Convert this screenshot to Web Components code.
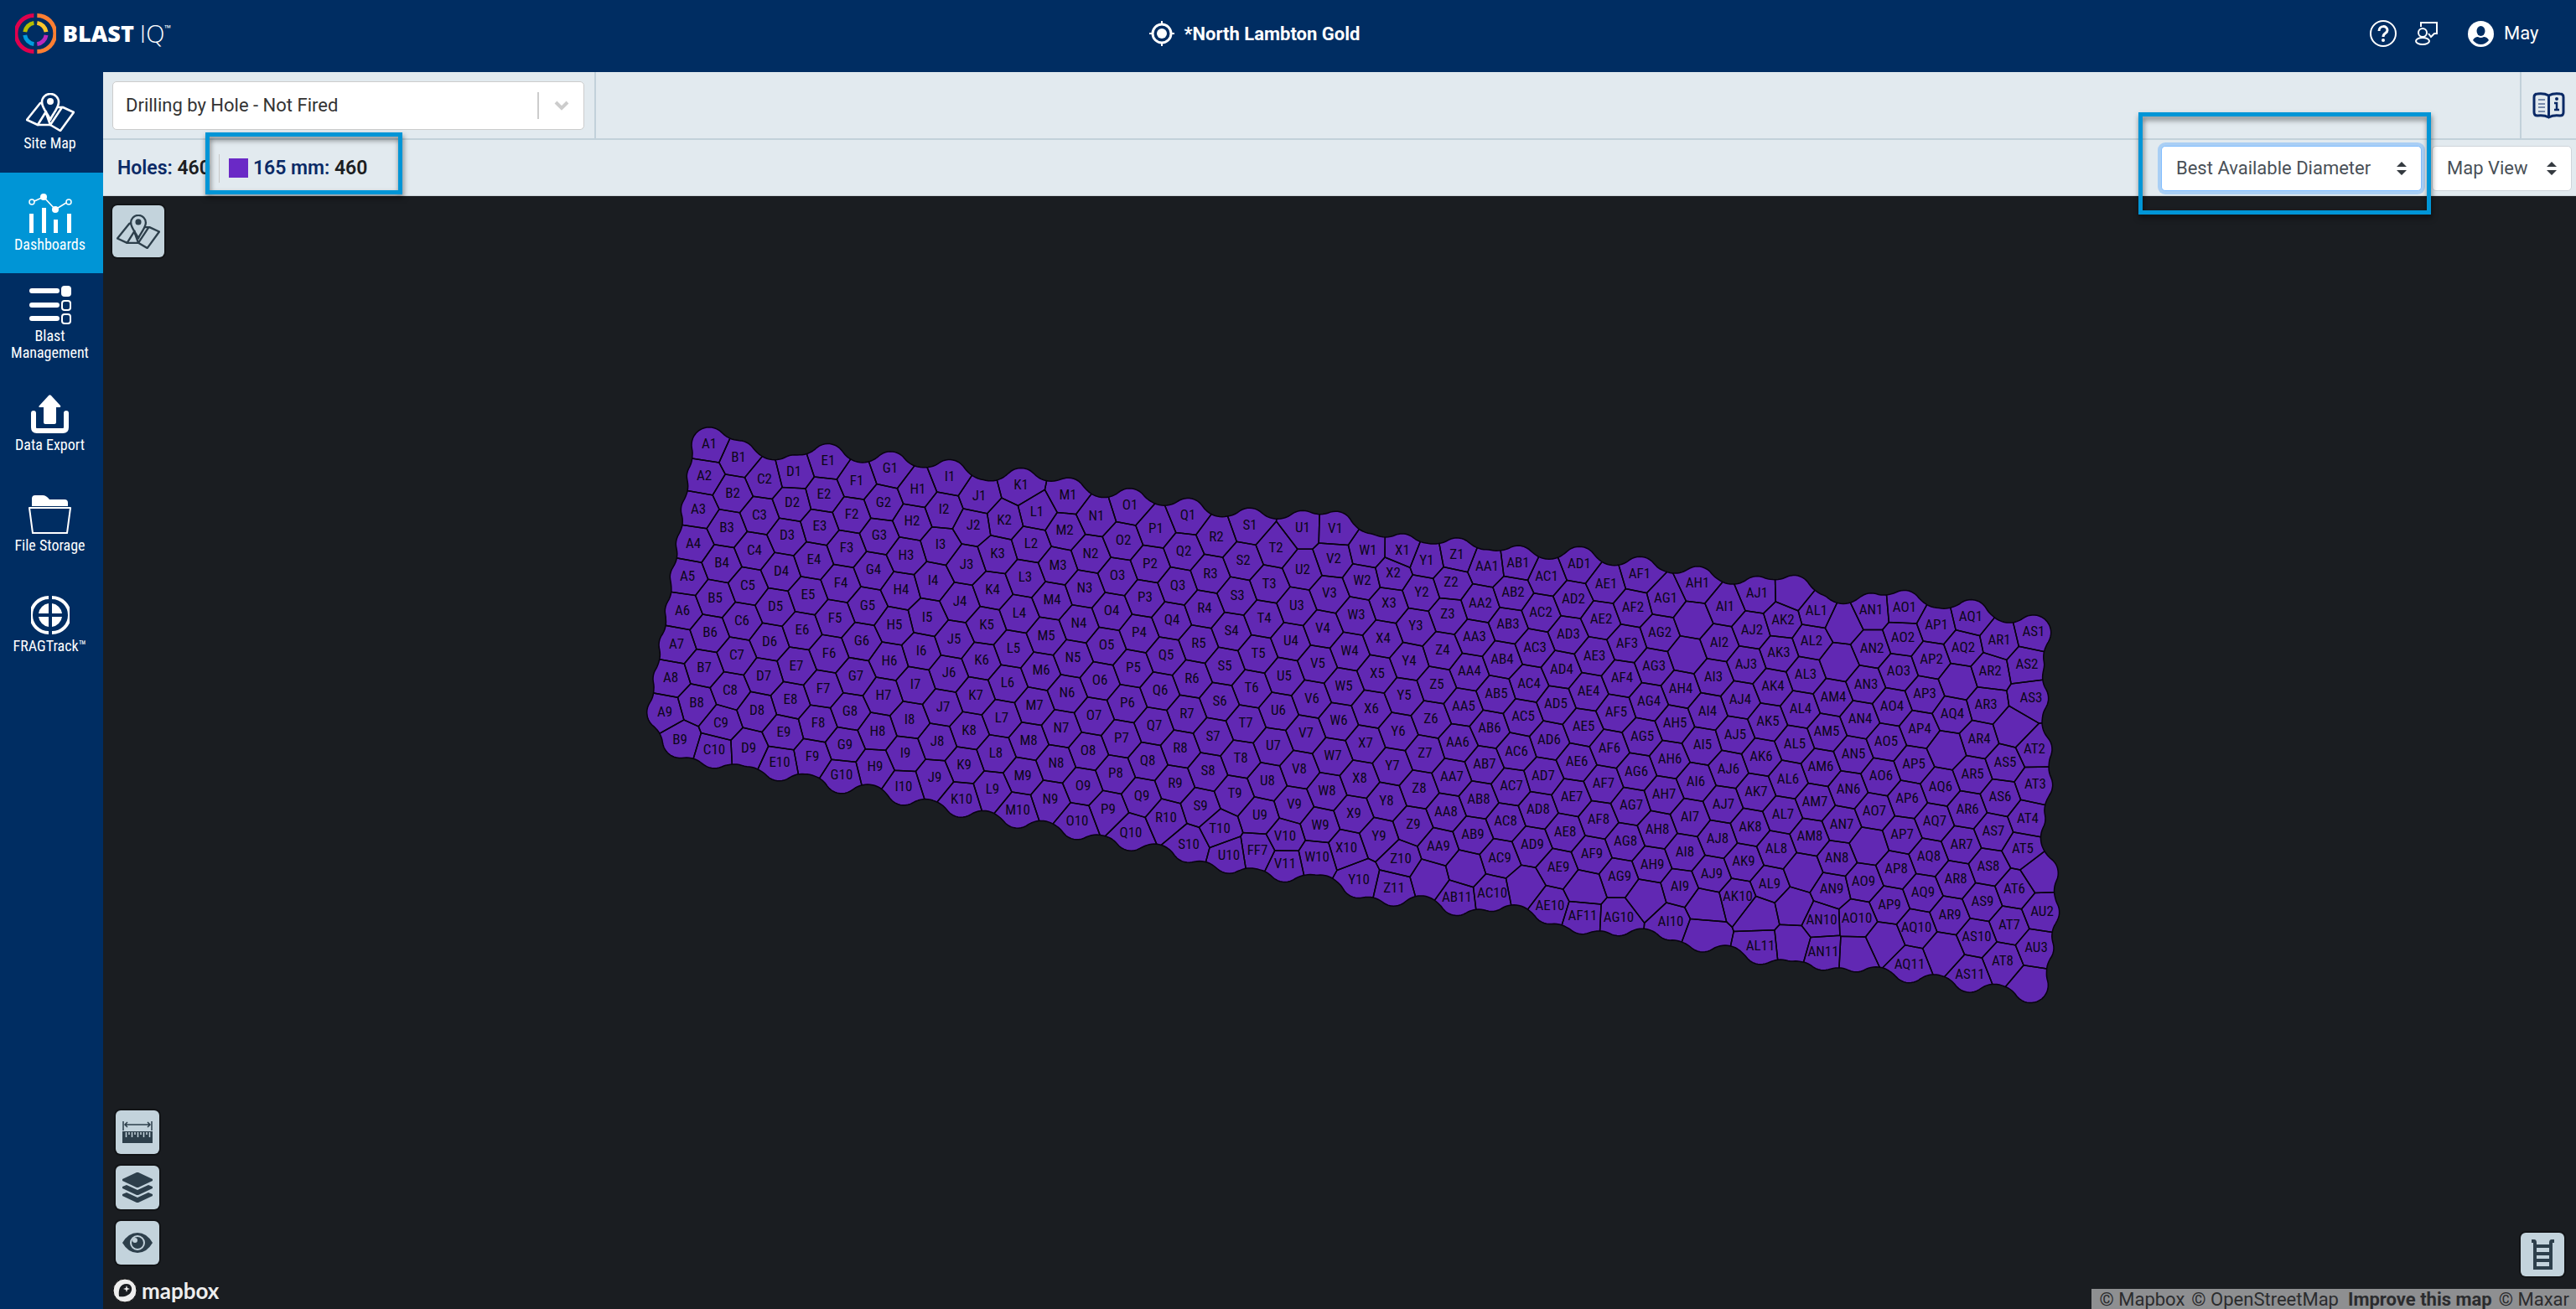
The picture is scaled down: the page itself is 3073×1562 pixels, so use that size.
<!DOCTYPE html>
<html lang="en">
<head>
<meta charset="utf-8">
<title>BlastIQ - Dashboards</title>
<style>
    html, body{
        height: 100%;
        margin: 0;
    }
    body{
        font-family: Roboto, "Liberation Sans", sans-serif;
        font-size: 22px;
        --navy: #002d62;
        --blue: #0095d6;
        --panel: #e2eaef;
        --line: #c2d1da;
        --ink: #2d3f4b;
        --narrow: "Roboto Condensed", "Liberation Sans Narrow", Roboto, sans-serif;
    }
</style>
</head>
<body>
<blast-app></blast-app>

<script>
const icons = {
    siteMap: `<svg viewBox="0 0 58 46" width="58" height="46" fill="none" stroke="currentColor" stroke-width="2.6" stroke-linejoin="round" stroke-linecap="round">
        <path d="M19 12 L17 12 L1 32 L14 38 L29 38 L41 45 L57 23 L44 17 L38 17"/>
        <path d="M14 38 L24 22 M24 24 L29 38 M29 38 L43 17"/>
        <path d="M29 32 C27 26 19 18 19 11 A10 10 0 0 1 39 11 C39 18 31 26 29 32 Z"/>
        <circle cx="29" cy="10" r="4" fill="currentColor" stroke="none"/></svg>`,
    dashboards: `<svg viewBox="0 0 52 47" width="52" height="47" fill="currentColor">
        <path d="M1 24 h5 v23 h-5z M16 17 h5 v30 h-5z M30 31 h5 v16 h-5z M46 24 h5 v23 h-5z"/>
        <path d="M7 9 L18 4 L32 19 L45 11" fill="none" stroke="currentColor" stroke-width="1.5"/>
        <circle cx="18" cy="4" r="4"/><circle cx="32" cy="19" r="4"/>
        <g fill="none" stroke="currentColor" stroke-width="1.5"><circle cx="4" cy="10" r="3"/><circle cx="48" cy="10" r="3"/></g></svg>`,
    management: `<svg viewBox="0 0 50 46" width="50" height="46" fill="currentColor">
        <rect y="3" width="36" height="6" rx="3"/><rect y="20" width="36" height="6" rx="3"/><rect y="36" width="36" height="6" rx="3"/>
        <rect x="38" width="12" height="13" rx="4"/>
        <g fill="none" stroke="currentColor" stroke-width="2"><rect x="39" y="18" width="10" height="11" rx="3"/><rect x="39" y="34" width="10" height="11" rx="3"/></g></svg>`,
    dataExport: `<svg viewBox="0 0 45 46" width="45" height="46" fill="currentColor">
        <path d="M21 1 q1.500 -1.500 3 0 L35 13 q1 2 -1 2 H30 V33 q0 2 -2 2 H17 q-2 0 -2 -2 V15 H11 q-3 0 -1 -2 Z"/>
        <path d="M3 22 V39 q0 4 4 4 H38 q4 0 4 -4 V22" fill="none" stroke="currentColor" stroke-width="6" stroke-linecap="round"/></svg>`,
    storage: `<svg viewBox="0 0 51 46" width="51" height="46" fill="currentColor">
        <path d="M4 13 V4 q0 -4 4 -4 H17 q4 0 8 5 H43 q4 0 4 4 V13 Z"/>
        <path d="M1 15 H50 L46 45 H5 Z" fill="none" stroke="currentColor" stroke-width="2" stroke-linejoin="round"/></svg>`,
    frag: `<svg viewBox="0 0 46 46" width="46" height="46" fill="currentColor">
        <path d="M21 2 A21 21 0 0 0 21 44 M25 2 A21 21 0 0 1 25 44" fill="none" stroke="currentColor" stroke-width="4"/>
        <path d="M21 9 V21 H9 A14 14 0 0 1 21 9 Z M25 9 V21 H37 A14 14 0 0 0 25 9 Z M21 37 V25 H9 A14 14 0 0 0 21 37 Z M25 37 V25 H37 A14 14 0 0 1 25 37 Z"/></svg>`,
    target: `<svg viewBox="0 0 30 30" width="30" height="30" fill="none" stroke="currentColor" stroke-width="2">
        <circle cx="15" cy="15" r="11" stroke-width="3"/><circle cx="15" cy="15" r="6" fill="currentColor" stroke="none"/>
        <path d="M15 0 V5 M15 25 V30 M0 15 H5 M25 15 H30"/></svg>`,
    help: `<svg viewBox="0 0 32 32" width="32" height="32" fill="none" stroke="currentColor" stroke-width="2">
        <circle cx="16" cy="16" r="15"/>
        <path d="M11 13 C11 6 21 6 21 12 C21 16 16 15 16 20" stroke-width="3"/><circle cx="16" cy="24" r="2" fill="currentColor" stroke="none"/></svg>`,
    feedback: `<svg viewBox="0 0 28 28" width="28" height="28" fill="none" stroke="currentColor" stroke-width="2">
        <circle cx="9" cy="13" r="5"/><ellipse cx="9" cy="23" rx="8" ry="4"/>
        <path d="M7 6 V1 H26 V14 H23 L19 18 L16 14"/></svg>`,
    user: `<svg viewBox="0 0 31 31" width="31" height="31"><circle cx="15.500" cy="15.500" r="15.500" fill="currentColor"/>
        <ellipse cx="15.500" cy="12" rx="5" ry="6" fill="var(--navy)"/><path d="M6 23 Q8 19 12 19 Q15.500 21 19 19 Q23 19 25 23 Q21 28 15.500 28 Q10 28 6 23 Z" fill="var(--navy)"/></svg>`,
    book: `<svg viewBox="0 0 39 32" width="39" height="32" fill="none" stroke="#0b2a66" stroke-width="3">
        <path d="M19.500 4 Q14 1 6 2 Q2 2 2 6 V24 Q2 28 6 28 Q14 27 19.500 30 Q25 27 33 28 Q37 28 37 24 V6 Q37 2 33 2 Q25 1 19.500 4 V29"/>
        <path d="M7 9 H15 M7 14 H15 M7 18 H15 M7 23 H15" stroke-width="1"/>
        <path d="M26 13 H29 V21 M26 21 H32" stroke-width="2.500"/><circle cx="29" cy="8" r="2" fill="#0b2a66" stroke="none"/></svg>`,
    ruler: `<svg viewBox="0 0 36 26" width="36" height="26" fill="currentColor">
        <path d="M0 12 H36 V26 H0 Z"/><path d="M1 0 V11 M35 0 V11 M4 4 H32 M6 1 L3 4 L6 7 M30 1 L33 4 L30 7" fill="none" stroke="currentColor" stroke-width="1.500"/>
        <path d="M4.500 13 V19 M8 13 V16 M11.500 13 V19 M15 13 V16 M18.500 13 V19 M22 13 V16 M25.500 13 V19 M29 13 V16 M32.500 13 V19" stroke="var(--line)" stroke-width="1.500"/></svg>`,
    layers: `<svg viewBox="0 0 36 36" width="36" height="36" fill="currentColor">
        <path d="M17 0 H19 L36 8 V10 L19 18 H17 L0 10 V8 Z"/>
        <path d="M0 17 L5 15 L18 21 L31 15 L36 17 V19 L19 27 H17 L0 19 Z"/><path d="M0 26 L5 24 L18 30 L31 24 L36 26 V28 L19 36 H17 L0 28 Z"/></svg>`,
    eye: `<svg viewBox="0 0 36 24" width="36" height="24"><path d="M0 12 Q7 0 18 0 Q29 0 36 12 Q29 24 18 24 Q7 24 0 12 Z" fill="currentColor"/>
        <circle cx="18" cy="12" r="8" fill="none" stroke="var(--line)" stroke-width="2"/><circle cx="15" cy="9" r="3" fill="var(--line)"/></svg>`,
    ladder: `<svg viewBox="0 0 29 36" width="29" height="36" fill="none" stroke="currentColor" stroke-width="4">
        <path d="M1 2 H4 Q5 2 5 4 V36 M28 2 H25 Q24 2 24 4 V36 M5 8 H24 M5 17 H24 M5 25 H24 M5 34 H24"/></svg>`,
    logo: `<svg viewBox="0 0 50 50" width="50" height="50" fill="none" stroke-width="5">
        <path d="M23 3 A22 22 0 0 0 23 47" stroke="#e0004d"/><path d="M27 3 A22 22 0 0 1 27 47" stroke="#ff7f32"/>
        <path d="M23 12 A13 13 0 0 0 12 23" stroke="#b5bd00"/><path d="M27 12 A13 13 0 0 1 38 23" stroke="#ffc72c"/>
        <path d="M23 38 A13 13 0 0 1 12 27" stroke="#009cde"/><path d="M27 38 A13 13 0 0 0 38 27" stroke="#bb29bb"/></svg>`,
    mapbox: `<svg viewBox="0 0 30 30" width="30" height="30"><circle cx="15" cy="15" r="14" fill="#eee" stroke="#111" stroke-width="1"/>
        <path d="M8 22 C7 14 9 7 17 7 C22 7 25 12 22 17 C20 21 14 23 8 22 Z" fill="#1a1d21"/><path d="M17 9 L18 12 L21 13 L18 14 L17 17 L16 14 L13 13 L16 12 Z" fill="#eee"/></svg>`
};

// Hole labels as they were digitised: x, y inside a sheet, kx and ky units per map pixel.
// A "-" is a hole with no name.
const sheets = [
    { x: 760, y: 500, kx: 3, ky: 3, holes: `
A1 258 88,A2 241 201,A3 220 321,A4 202 443,A5 181 561,A6 163 683,A7 141 804,A8 120 925,A9 98 1046,
B1 364 136,B2 343 263,B3 322 387,B4 303 514,B5 280 638,B6 260 763,B7 240 887,B8 214 1014,B9 154 1146,
C2 457 213,C3 439 341,C4 419 467,C5 397 594,C6 376 719,C7 356 844,C8 334 968,C9 301 1085,C10 277 1183,
D1 562 187,D2 556 297,D3 537 415,D4 515 543,D5 495 669,D6 474 794,D7 454 917,D8 430 1040,D9 398 1177,
E1 683 147,E2 670 267,E3 653 381,E4 632 502,E5 611 628,E6 590 753,E7 571 881,E8 549 1003,E9 525 1119,E10 509 1228,
F1 786 218,F2 768 339,F3 749 459,F4 729 584,F5 708 710,F6 687 836,F7 666 962,F8 647 1087,F9 627 1206,
G1 907 175,G2 881 297,G3 867 413,G4 846 538,G5 824 665,G6 803 792,G7 782 918,G8 763 1044,G9 743 1164,G10 732 1273,
H1 1004 249,H2 985 363,H3 964 485,H4 945 609,H5 922 736,H6 902 863,H7 881 988,H8 860 1115,H9 852 1243,
I5 1039 707,I6 1017 827,I7 997 948,I8 976 1075,I9 961 1195,I10 955 1315` },
    { x: 1100, y: 540, kx: 3, ky: 3, holes: `
I1 98 84,I2 77 202,I3 65 328,I4 40 457,
J1 203 154,J2 182 257,J3 159 398,J4 136 532,J5 115 667,J6 95 787,J7 74 908,J8 54 1033,J9 45 1160,
K1 354 114,K2 295 239,K3 270 360,K4 253 489,K5 230 616,K6 212 742,K7 191 866,K8 169 992,K9 151 1116,K10 140 1238,
L1 411 210,L2 390 323,L3 370 445,L4 348 573,L5 327 699,L6 307 823,L7 285 947,L8 265 1075,L9 252 1203,
M1 523 149,M2 511 277,M3 486 401,M4 465 526,M5 445 653,M6 425 778,M7 402 904,M8 382 1029,M9 361 1154,M10 342 1277,
N1 623 225,N2 604 360,N3 583 484,N4 562 609,N5 541 733,N6 520 859,N7 499 984,N8 479 1109,N9 459 1238,
O1 743 187,O2 719 313,O3 700 439,O4 679 565,O5 659 688,O6 637 813,O7 616 940,O8 595 1065,O9 575 1190,O10 555 1318,
P1 836 269,P2 817 395,P3 797 517,P4 777 643,P5 755 769,P6 734 894,P7 713 1020,P8 692 1147,P9 667 1276,
Q1 951 222,Q2 936 350,Q3 914 473,Q4 893 598,Q5 873 724,Q6 851 850,Q7 830 975,Q8 808 1101,Q9 786 1227,Q10 748 1358,
R3 1031 431,R4 1010 556,R5 989 681,R6 967 806,R7 947 932,R8 925 1057,R9 905 1182,R10 874 1304,
S8 1022 1138,S9 996 1264,S10 954 1400` },
    { x: 1440, y: 580, kx: 3, ky: 3, holes: `
R2 34 179,S1 152 137,S2 130 264,S3 107 389,S4 87 516,S5 64 641,S6 44 767,S7 22 893,
T2 246 219,T3 223 347,T4 203 471,T5 182 597,T6 160 721,T7 139 847,T8 120 973,T9 99 1099,T10 44 1223,
U1 342 146,U2 342 297,U3 320 427,U4 299 552,U5 277 677,U6 256 802,U7 237 928,U8 215 1054,U9 189 1176,U10 79 1319,
FF7 181 1303,
V1 460 149,V2 453 258,V3 439 381,V4 415 508,V5 395 633,V6 374 758,V7 353 883,V8 331 1011,V9 311 1137,V10 279 1251,V11 278 1350,
W1 575 228,W2 556 335,W3 533 460,W4 511 588,W5 490 714,W6 470 838,W7 450 964,W8 429 1089,W9 404 1212,W10 393 1325,
X1 698 229,X2 665 309,X3 650 418,X4 629 543,X5 608 668,X6 588 794,X7 567 919,X8 546 1045,X9 525 1170,X10 499 1293,
Y1 787 264,Y2 767 377,Y3 748 499,Y4 724 624,Y5 706 748,Y6 684 875,Y7 664 999,Y8 642 1124,Y9 615 1252,Y10 542 1407,
Z1 894 244,Z2 873 342,Z3 862 457,Z4 842 586,Z5 821 708,Z6 802 830,Z7 780 954,Z8 759 1081,Z9 738 1210,Z10 692 1332,Z11 668 1436,
AA1 1001 286,AA2 978 418,AA3 958 538,AA4 938 661,AA5 917 786,AA6 898 916,AA7 876 1037,AA8 856 1163,AA9 829 1287,
AB5 1034 742,AB6 1012 865,AB7 992 994,AB8 972 1119,AB9 952 1245,AB11 894 1470,AC9 1047 1328,AC10 1019 1455,
- 797 1400,- 925 1367` },
    { x: 1780, y: 620, kx: 3, ky: 2.9037, holes: `
AB1 93 147,AB2 75 250,AB3 58 361,AB4 37 481,
AC1 196 194,AC2 175 318,AC3 152 440,AC4 131 565,AC5 111 680,AC6 86 800,AC7 68 921,AC8 49 1043,
AD1 312 150,AD2 290 273,AD3 272 394,AD4 248 516,AD5 229 637,AD6 205 761,AD7 184 886,AD8 165 1002,AD9 144 1124,
AE1 407 220,AE2 389 343,AE3 367 470,AE4 345 593,AE5 326 715,AE6 302 837,AE7 284 959,AE8 261 1079,AE9 236 1203,AE10 206 1336,
AF1 529 185,AF2 505 301,AF3 483 426,AF4 464 547,AF5 444 665,AF6 421 790,AF7 399 913,AF8 380 1036,AF9 357 1157,AF11 323 1371,
AG1 621 271,AG2 601 388,AG3 580 505,AG4 560 627,AG5 537 748,AG6 517 870,AG7 497 988,AG8 476 1113,AG9 455 1234,AG10 453 1377,
AH1 735 219,AH4 676 583,AH5 654 704,AH6 635 827,AH7 615 950,AH8 591 1071,AH9 572 1192,
AI1 834 299,AI2 813 423,AI3 793 542,AI4 772 661,AI5 752 778,AI6 730 905,AI7 709 1028,AI8 689 1149,AI9 672 1270,AI10 639 1392,
AJ1 948 253,AJ2 929 379,AJ3 910 498,AJ4 889 621,AJ5 869 742,AJ6 846 861,AJ7 827 983,AJ8 807 1102,AJ9 785 1226,
AK2 1040 346,AK3 1027 458,AK4 1005 576,AK5 986 697,AK6 964 819,AK7 944 940,AK8 923 1062,AK9 901 1183,AK10 879 1305,
AL8 1018 1139,AL9 994 1260,AL11 961 1476,
- 720 345,- 699 464,- 117 1270,- 332 1275,- 553 1303,- 763 1333,- 754 1433,- 957 1363` },
    { x: 2120, y: 680, kx: 3, ky: 2.9585, holes: `
AL1 141 142,AL2 124 248,AL3 103 367,AL4 83 488,AL5 63 611,AL6 40 736,AL7 20 861,
AM4 200 446,AM5 178 569,AM6 157 693,AM7 136 816,AM8 117 939,
AN1 337 140,AN2 338 274,AN3 317 401,AN4 296 524,AN5 273 649,AN6 254 771,AN7 231 895,AN8 214 1016,AN9 195 1125,AN10 159 1233,AN11 166 1347,
AO1 455 130,AO2 450 236,AO3 434 355,AO4 412 479,AO5 391 604,AO6 371 726,AO7 349 849,AO9 310 1098,AO10 286 1228,
AP1 570 192,AP2 551 314,AP3 529 436,AP4 509 558,AP5 489 683,AP6 466 806,AP7 448 932,AP8 425 1054,AP9 403 1179,
AQ1 694 163,AQ2 667 272,AQ4 627 505,AQ6 584 762,AQ7 563 886,AQ8 542 1010,AQ9 522 1136,AQ10 499 1260,AQ11 473 1391,
AR1 796 245,AR2 761 355,AR3 747 472,AR4 722 595,AR5 700 719,AR6 680 843,AR7 659 966,AR8 638 1089,AR9 618 1215,
AS1 917 217,AS2 893 331,AS3 908 449,AS5 815 678,AS6 799 799,AS7 775 920,AS8 757 1045,AS9 735 1168,AS10 714 1294,AS11 689 1425,
AT2 921 629,AT3 923 755,AT4 897 875,AT5 878 982,AT6 850 1125,AT7 830 1250,AT8 807 1379,AU2 947 1204,AU3 927 1331,
- 60 77,- 238 187,- 222 323,- 649 390,- 608 631,- 845 556,- 329 970,- 95 1061,- 58 1185,- 52 1315,
- 283 1353,- 386 1306,- 597 1343,- 943 1066,- 907 1462` }
];

function readHoles(){
    const holes = [];
    sheets.forEach(s => {
        s.holes.split(',').forEach(row => {
            const [name, x, y] = row.trim().split(' ');
            // the hole itself sits a little under the middle of its label
            const hx = s.x + x / s.kx, hy = s.y + y / s.ky;
            holes.push({ name: name === '-' ? '' : name, x: hx, y: hy + 1.5, ly: hy });
        });
    });
    return holes;
}

// Voronoi cell of one hole: a box cut by the bisector with every near hole
function cellOf(hole, holes){
    let poly = [[-60, -60], [60, -60], [60, 60], [-60, 60]].map(p => [hole.x + p[0], hole.y + p[1]]);
    holes.forEach(o => {
        const dx = o.x - hole.x, dy = o.y - hole.y;
        if (o === hole || dx * dx + dy * dy > 32400) return;
        const mx = (o.x + hole.x) / 2, my = (o.y + hole.y) / 2;
        const side = p => (p[0] - mx) * dx + (p[1] - my) * dy;
        const out = [];
        poly.forEach((a, i) => {
            const b = poly[(i + 1) % poly.length];
            const sa = side(a), sb = side(b);
            if (sa <= 0) out.push(a);
            if ((sa <= 0) !== (sb <= 0)) {
                const t = sa / (sa - sb);
                out.push([a[0] + (b[0] - a[0]) * t, a[1] + (b[1] - a[1]) * t]);
            }
        });
        poly = out;
    });
    return poly;
}

// Grid for the outer edge of the pattern
const grid = { x: 690, y: 430, step: 3, cols: 630, rows: 300 };

// Distance from every grid point to the nearest of the points, far ones stay at 1000
function distances(points, reach){
    const field = new Float64Array(grid.cols * grid.rows).fill(1000);
    const n = Math.ceil(reach / grid.step) + 2;
    points.forEach(([px, py]) => {
        const ci = Math.round((px - grid.x) / grid.step), cj = Math.round((py - grid.y) / grid.step);
        for (let j = Math.max(cj - n, 0); j <= Math.min(cj + n, grid.rows - 1); j++) {
            for (let i = Math.max(ci - n, 0); i <= Math.min(ci + n, grid.cols - 1); i++) {
                const d = Math.hypot(grid.x + i * grid.step - px, grid.y + j * grid.step - py);
                const at = j * grid.cols + i;
                if (d < field[at]) field[at] = d;
            }
        }
    });
    return field;
}

// Marching squares, gives the closed lines where the field crosses zero
function contours(field){
    const points = {}, next = {};
    const val = (i, j) => field[j * grid.cols + i];
    const cross = (i, j, k, l) => {
        const key = (i + k) + '_' + (j + l);
        const a = val(i, j), b = val(k, l), t = a / (a - b);
        points[key] = [grid.x + (i + (k - i) * t) * grid.step, grid.y + (j + (l - j) * t) * grid.step];
        return key;
    };
    for (let j = 0; j < grid.rows - 1; j++) {
        for (let i = 0; i < grid.cols - 1; i++) {
            const c = [[i, j], [i + 1, j], [i + 1, j + 1], [i, j + 1]];
            let from, to;
            c.forEach((p, n) => {
                const q = c[(n + 1) % 4];
                const a = val(...p) > 0, b = val(...q) > 0;
                if (a && !b) from = cross(...p, ...q);
                if (!a && b) to = cross(...p, ...q);
            });
            if (from) next[from] = to;
        }
    }
    const lines = [], seen = {};
    Object.keys(next).forEach(start => {
        if (seen[start]) return;
        const line = [];
        for (let k = start; k && !seen[k]; k = next[k]) {
            seen[k] = true;
            line.push(points[k]);
        }
        lines.push(line);
    });
    return lines.filter(l => l.length > 200);
}

// Discs round the holes, grown by `close` and shrunk back, so the gaps between them fill up
function outlineOf(holes){
    const radius = 21, close = 28;
    const grown = distances(holes.map(h => [h.x, h.y]), radius + close).map(d => radius + close - d);
    const rim = contours(grown).flat();
    const inner = distances(rim, close).map((d, i) => grown[i] > 0 ? d - close : -close);
    return contours(inner).map(l => 'M' + l.map(p => p[0].toFixed(1) + ' ' + p[1].toFixed(1)).join('L') + 'Z').join('');
}

class BlastApp extends HTMLElement{
    constructor(){
        super()
        this._shadowRoot = this.attachShadow({mode : 'open'});
        this._shadowRoot.innerHTML = `
    <style>
        :host{
            display: flex;
            flex-direction: column;
            height: 100vh;
            overflow: hidden;
        }
        .body{
            display: flex;
            flex: 1;
            min-height: 0;
        }
        main{
            display: flex;
            flex-direction: column;
            flex: 1;
            min-width: 0;
        }
    </style>
    <app-header></app-header>
    <div class="body">
        <side-nav>
            <nav-item icon="siteMap">Site Map</nav-item>
            <nav-item icon="dashboards" active>Dashboards</nav-item>
            <nav-item icon="management">Blast Management</nav-item>
            <nav-item icon="dataExport">Data Export</nav-item>
            <nav-item icon="storage">File Storage</nav-item>
            <nav-item icon="frag">FRAGTrack™</nav-item>
        </side-nav>
        <main>
            <tool-bar></tool-bar>
            <blast-map></blast-map>
        </main>
    </div>`
    }
}

class AppHeader extends HTMLElement{
    constructor(){
        super()
        this._shadowRoot = this.attachShadow({mode : 'open'});
        this._shadowRoot.innerHTML = `
    <style>
        :host{
            display: block;
            background-color: var(--navy);
            color: white;
        }
        header{
            display: flex;
            align-items: center;
            height: 86px;
            padding-bottom: 6px;
            box-sizing: border-box;
        }
        svg{ display: block; }
        .logo{
            display: flex;
            align-items: center;
            gap: 8px;
            width: 186px;
            padding-left: 18px;
            color: white;
            text-decoration: none;
            white-space: nowrap;
        }
        .word{
            display: flex;
            align-items: center;
            font: 800 27px/30px "Open Sans", sans-serif;
        }
        .iq{ font-weight: 300; font-size: 29px; margin-left: 7px; }
        .tm{ font-size: 10px; font-weight: 600; align-self: flex-start; line-height: 16px; }
        .site{
            display: flex;
            flex: 1;
            justify-content: center;
            align-items: center;
            gap: 12px;
            margin: 0;
            font-size: 22px;
            font-weight: 700;
        }
        .tools{
            display: flex;
            align-items: center;
            width: 246px;
            padding-left: 38px;
        }
        button{
            display: flex;
            align-items: center;
            gap: 12px;
            padding: 0;
            border: 0;
            background: none;
            color: inherit;
            font: 22px/28px Roboto, sans-serif;
        }
        .help{ margin-right: 22px; }
        .user{ margin-left: 35px; }
    </style>
    <header>
        <a class="logo" href="#">${icons.logo}<span class="word">BLAST<span class="iq">IQ</span><span class="tm">™</span></span></a>
        <h1 class="site">${icons.target}<span>*North Lambton Gold</span></h1>
        <div class="tools">
            <button class="help" aria-label="Help">${icons.help}</button>
            <button aria-label="Feedback">${icons.feedback}</button>
            <button class="user">${icons.user}<span>May</span></button>
        </div>
    </header>`
    }
}

class SideNav extends HTMLElement{
    constructor(){
        super()
        this._shadowRoot = this.attachShadow({mode : 'open'});
        this._shadowRoot.innerHTML = `
    <style>
        :host{
            display: block;
            flex: none;
            width: 123px;
            background-color: var(--navy);
        }
        nav{
            display: flex;
            flex-direction: column;
        }
    </style>
    <nav><slot></slot></nav>`
    }
}

class NavItem extends HTMLElement{
    constructor(){
        super()
        this._shadowRoot = this.attachShadow({mode : 'open'});
    }
    connectedCallback(){
        this._shadowRoot.innerHTML = `
    <style>
        :host{ display: block; }
        :host([active]){ background-color: var(--blue); }
        a{
            display: flex;
            flex-direction: column;
            align-items: center;
            justify-content: center;
            gap: 4px;
            height: 120px;
            padding: 0 12px 0 8px;
            box-sizing: border-box;
            color: white;
            text-align: center;
            text-decoration: none;
            font: 18px/20px var(--narrow);
        }
        svg{ display: block; }
    </style>
    <a href="#">${icons[this.getAttribute('icon')]}<span><slot></slot></span></a>`
    }
}

// A select with its own arrow laid over the right end
class DropDown extends HTMLElement{
    constructor(){
        super()
        this._shadowRoot = this.attachShadow({mode : 'open'});
    }
    connectedCallback(){
        const big = this.hasAttribute('big');
        const arrow = big
            ? `<svg viewBox="0 0 44 32" width="44" height="32" fill="none" stroke="#ccc"><path d="M1 0 V32" stroke-width="2"/><path d="M22 12 L29 19 L36 12" stroke-width="4"/></svg>`
            : `<svg viewBox="0 0 12 16" width="12" height="16" fill="#343a40"><path d="M6 0 L12 6 H0 Z M0 10 H12 L6 16 Z"/></svg>`;
        this._shadowRoot.innerHTML = `
    <style>
        :host{ display: grid; align-items: center; }
        select, svg{ grid-area: 1 / 1; }
        select{
            appearance: none;
            width: 100%;
            height: 54px;
            padding: 0 17px;
            border: 1px solid #ced4da;
            border-radius: 5px;
            background-color: white;
            color: #495057;
            font: 22px/30px Roboto, sans-serif;
        }
        :host([big]) select{ height: 58px; color: #333; border-color: #ccc; padding: 0 15px; }
        :host([focused]) select{ border-color: #80bdff; box-shadow: 0 0 0 4px #a9cff5; }
        svg{
            justify-self: end;
            margin-right: 18px;
            pointer-events: none;
        }
        :host([big]) svg{ margin-right: 12px; }
    </style>
    <select aria-label="${this.getAttribute('label')}"><option>${this.getAttribute('value')}</option></select>${arrow}`
    }
}

class CallOut extends HTMLElement{
    constructor(){
        super()
        this._shadowRoot = this.attachShadow({mode : 'open'});
        this._shadowRoot.innerHTML = `
    <style>
        :host{
            display: block;
            position: absolute;
            border: 5px solid var(--blue);
            filter: drop-shadow(1px 4px 3px rgba(0, 0, 0, .5));
            pointer-events: none;
        }
    </style>`
    }
}

class ToolBar extends HTMLElement{
    constructor(){
        super()
        this._shadowRoot = this.attachShadow({mode : 'open'});
        this._shadowRoot.innerHTML = `
    <style>
        :host{
            display: block;
            position: relative;
            z-index: 1;
            background-color: var(--panel);
        }
        .row{
            display: flex;
            justify-content: space-between;
            align-items: stretch;
        }
        .top{ height: 79px; border-bottom: 2px solid var(--line); }
        .bottom{ height: 65px; align-items: center; padding: 1px 5px 0 17px; border-bottom: 1px solid #cdd6db; }
        .pick{
            width: 563px;
            padding: 11px 12px 0 11px;
            border-right: 2px solid var(--line);
        }
        .guide{
            display: flex;
            align-items: center;
            width: 67px;
            padding: 0 0 0 13px;
            box-sizing: border-box;
            border: 0;
            border-left: 2px solid var(--line);
            background: none;
        }
        .legend, .entry, .views{ display: flex; align-items: center; }
        .legend{ font-size: 23px; font-weight: 600; color: #1b1d21; white-space: nowrap; gap: 10px; }
        b{ font-weight: 600; color: #0b2a66; }
        .entry, .best{ position: relative; }
        .entry{
            height: 34px;
            padding-left: 11px;
            border-left: 1px solid #c8c8c8;
            gap: 6px;
        }
        .swatch{ width: 23px; height: 23px; background-color: #6a29c6; }
        .entry call-out{ inset: -26px -42px -14px -17px; }
        .views{ gap: 12px; }
        .best{ width: 311px; }
        .mode{ width: 167px; }
        .best call-out{ inset: -40px -11px -28px -27px; }
    </style>
    <div class="row top">
        <div class="pick"><drop-down big label="Dashboard" value="Drilling by Hole - Not Fired"></drop-down></div>
        <button class="guide" aria-label="Guide">${icons.book}</button>
    </div>
    <div class="row bottom">
        <div class="legend">
            <span><b>Holes:</b> 460</span>
            <div class="entry"><span class="swatch"></span><span><b>165 mm:</b> 460</span><call-out></call-out></div>
        </div>
        <div class="views">
            <div class="best"><drop-down focused label="Colour by" value="Best Available Diameter"></drop-down><call-out></call-out></div>
            <div class="mode"><drop-down label="View" value="Map View"></drop-down></div>
        </div>
    </div>`
    }
}

class MapButton extends HTMLElement{
    constructor(){
        super()
        this._shadowRoot = this.attachShadow({mode : 'open'});
    }
    connectedCallback(){
        this._shadowRoot.innerHTML = `
    <style>
        :host{ display: block; width: 52px; height: 52px; }
        :host([large]){ width: 62px; height: 62px; }
        button{
            display: flex;
            align-items: center;
            justify-content: center;
            width: 100%;
            height: 100%;
            padding: 0;
            border: 0;
            border-radius: 6px;
            background-color: #c3d3dc;
            box-shadow: 0 0 0 2px rgba(0, 0, 0, .3);
            color: var(--ink);
        }
        svg{ display: block; }
        :host([large]) svg{ width: 52px; height: 41px; }
    </style>
    <button aria-label="${this.getAttribute('label')}">${icons[this.getAttribute('icon')]}</button>`
    }
}

class BlastMap extends HTMLElement{
    constructor(){
        super()
        this._shadowRoot = this.attachShadow({mode : 'open'});
        this._shadowRoot.innerHTML = `
    <style>
        :host{
            display: grid;
            flex: 1;
            min-height: 0;
            overflow: hidden;
            background-color: #1a1d21;
        }
        .pattern, .controls{ grid-area: 1 / 1; min-width: 0; min-height: 0; }
        .pattern{ width: 100%; height: 100%; }
        .pattern polygon, .edge{ stroke: #08030f; stroke-width: 1.5px; fill: none; }
        .area{ fill: #6128b3; }
        text{
            font: 17px var(--narrow);
            fill: #0d0618;
            text-anchor: middle;
            dominant-baseline: central;
        }
        .controls{
            display: flex;
            justify-content: space-between;
            z-index: 1;
        }
        .left, .right{
            display: flex;
            flex-direction: column;
            justify-content: space-between;
        }
        .left{ padding: 11px 0 7px 11px; }
        .stack{
            display: flex;
            flex-direction: column;
            gap: 14px;
            padding-left: 4px;
        }
        .brand{
            display: flex;
            align-items: center;
            gap: 5px;
            margin-top: 2px;
            margin-left: -4px;
            color: #eee;
            text-decoration: none;
            font: 700 26px/30px Lato, sans-serif;
        }
        .brand svg{ display: block; }
        .right{ justify-content: flex-end; align-items: flex-end; gap: 15px; }
        .right map-button{ margin-right: 14px; }
        .credits{
            display: flex;
            gap: 8px;
            height: 24px;
            padding: 0 8px 0 9px;
            overflow: hidden;
            background-color: #8e8f91;
            font-size: 22px;
            line-height: 26px;
            white-space: nowrap;
        }
        .credits a{ color: #2b2c2e; text-decoration: none; }
        .credits .improve{ font-weight: 700; margin-left: 3px; }
    </style>
    <svg class="pattern" viewBox="123 234 2950 1328"></svg>
    <div class="controls">
        <div class="left">
            <map-button large icon="siteMap" label="Site map"></map-button>
            <div class="stack">
                <map-button icon="ruler" label="Measure"></map-button>
                <map-button icon="layers" label="Layers"></map-button>
                <map-button icon="eye" label="Visibility"></map-button>
                <a class="brand" href="#">${icons.mapbox}<span>mapbox</span></a>
            </div>
        </div>
        <div class="right">
            <map-button icon="ladder" label="Legend"></map-button>
            <div class="credits"><a href="#">© Mapbox</a><a href="#">© OpenStreetMap</a><a class="improve" href="#">Improve this map</a><a href="#">© Maxar</a></div>
        </div>
    </div>`
        this.draw();
    }
    draw(){
        const holes = readHoles();
        const outline = outlineOf(holes);
        const cells = holes.map(h => `<polygon points="${cellOf(h, holes).map(p => p[0].toFixed(1) + ',' + p[1].toFixed(1)).join(' ')}"/>`);
        const labels = holes.filter(h => h.name).map(h => `<text x="${Math.round(h.x)}" y="${Math.round(h.ly)}">${h.name}</text>`);
        this._shadowRoot.querySelector('.pattern').innerHTML = `
            <clipPath id="clip"><path d="${outline}"/></clipPath>
            <path class="area" d="${outline}"/>
            <g clip-path="url(#clip)">${cells.join('')}</g>
            <path class="edge" d="${outline}"/>
            ${labels.join('')}`;
    }
}

window.customElements.define('map-button', MapButton);
window.customElements.define('call-out', CallOut);
window.customElements.define('drop-down', DropDown);
window.customElements.define('nav-item', NavItem);
window.customElements.define('side-nav', SideNav);
window.customElements.define('app-header', AppHeader);
window.customElements.define('tool-bar', ToolBar);
window.customElements.define('blast-map', BlastMap);
window.customElements.define('blast-app', BlastApp);
</script>
</body>
</html>
